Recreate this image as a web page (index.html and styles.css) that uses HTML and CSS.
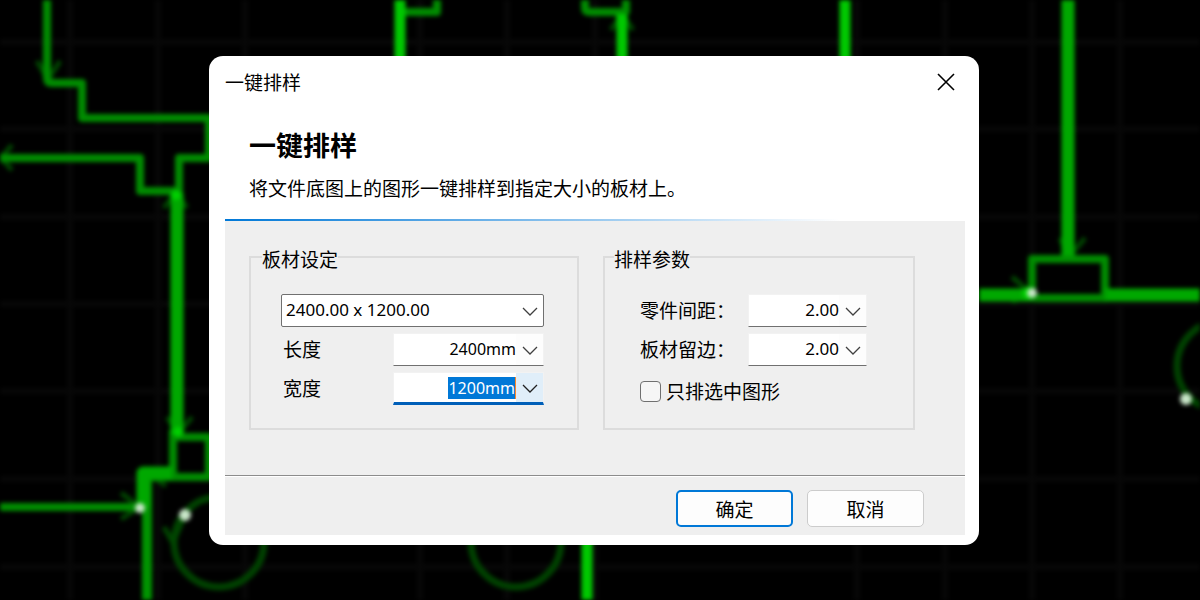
FILE: index.html
```html
<!DOCTYPE html>
<html lang="zh-CN">
<head>
  <meta charset="UTF-8">
  <meta name="viewport" content="width=device-width, initial-scale=1.0">
  <title>一键排样</title>
  <link rel="stylesheet" href="styles.css">
</head>
<body>
<svg class="drawing" viewBox="0 0 1200 600" preserveAspectRatio="xMidYMid slice" aria-hidden="true">
  <path class="grid" d="M70 0V600M158 0V600M245 0V600M420 0V600M507 0V600M595 0V600M857 0V600M945 0V600M1032 0V600M1120 0V600M0 42H1200M0 129H1200M0 217H1200M0 304H1200M0 391H1200M0 479H1200M0 567H1200"/>

  <!-- arrows -->
  <path class="arrow" d="M37 61L48 80L60 61M12 145L1 158L12 170M164 208L176 192L187 208M167 417L178 434L192 417M121 493L140 507L121 519M154 478L166 486M611 30L622 14L633 30M1060 238L1069 257L1085 238M1012 277L1030 292L1012 302"/>

  <!-- circles -->
  <circle class="arc" cx="219" cy="542" r="45"/>
  <circle class="arc" cx="516" cy="542" r="45"/>
  <circle class="arc" cx="1222" cy="366" r="45"/>
  <path class="arrow" d="M164 527L173 543L185 515M1186 399L1200 405"/>

  <!-- part outlines -->
  <path class="line" d="M47 0V78Q47 83 52 83H82V118H209V158H179V195"/>
  <path class="line" d="M0 158H140V191H176M0 507H142"/>
  <path class="line" d="M173 430V475M176 437H209V477H148"/>
  <path class="line" d="M400 12H437V0M585 0V8Q585 12 590 12H622M626 0V14"/>
  <path class="line" d="M1032 295V259H1105V298H1032"/>
  <path class="line bold" d="M147 600V475"/>
  <path class="line heavy" d="M177 193V434M1068 0V256M979 295H1032M1105 295H1210"/>
  <path class="line heavy" d="M143 508V473H172"/>
  <path class="line bright" d="M400 -10V60M622 14V60M845 -10V60M587 540V610"/>
  <circle class="glow" cx="176" cy="195" r="5"/>
  <circle class="glow" cx="178" cy="432" r="5"/>
  <circle class="glow" cx="1028" cy="293" r="6"/>

  <circle class="node" cx="140" cy="508" r="5"/>
  <circle class="node" cx="185" cy="515" r="6"/>
  <circle class="node" cx="1032" cy="293" r="5"/>
  <circle class="node" cx="1186" cy="399" r="6"/>
</svg>

<main class="stage">
  <form class="dialog" id="nestForm">
    <div class="titlebar">
      <span>一键排样</span>
      <button type="button" class="close" aria-label="关闭">
        <svg viewBox="0 0 18 18" width="18" height="18"><path d="M1 1L17 17M17 1L1 17"/></svg>
      </button>
    </div>

    <header class="header">
      <h1>一键排样</h1>
      <p>将文件底图上的图形一键排样到指定大小的板材上。</p>
    </header>

    <div class="content">
      <fieldset class="group sheet">
        <legend>板材设定</legend>
        <div class="select-box">
          <select aria-label="板材尺寸">
            <option>2400.00 x 1200.00</option>
          </select>
          <svg class="chevron" viewBox="0 0 16 9"><path d="M1 1L8 8L15 1"/></svg>
        </div>
        <div class="row">
          <label for="length">长度</label>
          <div class="combo">
            <input type="text" id="length" class="unit" value="2400mm">
            <button type="button" aria-label="选择长度"><svg class="chevron" viewBox="0 0 16 9"><path d="M1 1L8 8L15 1"/></svg></button>
          </div>
        </div>
        <div class="row">
          <label for="width">宽度</label>
          <div class="combo active">
            <input type="text" id="width" class="unit" value="1200mm">
            <button type="button" aria-label="选择宽度"><svg class="chevron" viewBox="0 0 16 9"><path d="M1 1L8 8L15 1"/></svg></button>
          </div>
        </div>
      </fieldset>

      <fieldset class="group params">
        <legend>排样参数</legend>
        <div class="row">
          <label for="gap">零件间距：</label>
          <div class="combo">
            <input type="text" id="gap" value="2.00">
            <button type="button" aria-label="选择零件间距"><svg class="chevron" viewBox="0 0 16 9"><path d="M1 1L8 8L15 1"/></svg></button>
          </div>
        </div>
        <div class="row">
          <label for="margin">板材留边：</label>
          <div class="combo">
            <input type="text" id="margin" value="2.00">
            <button type="button" aria-label="选择板材留边"><svg class="chevron" viewBox="0 0 16 9"><path d="M1 1L8 8L15 1"/></svg></button>
          </div>
        </div>
        <div class="check">
          <input type="checkbox" id="selectedOnly">
          <label for="selectedOnly">只排选中图形</label>
        </div>
      </fieldset>
    </div>

    <footer class="footer">
      <button type="submit" class="btn primary">确定</button>
      <button type="button" class="btn">取消</button>
    </footer>
  </form>
</main>

<script>
  const widthInput = document.getElementById('width');
  widthInput.focus();
  widthInput.select();

  document.getElementById('nestForm').addEventListener('submit', e => e.preventDefault());
</script>
</body>
</html>
```
FILE: styles.css
```css
:root {
  --panel: #efefef;
  --group-border: #dcdcdc;
  --accent: #0078d7;
  --accent-dark: #005fb8;
  --text: #000000;
}

* {
  box-sizing: border-box;
}

body {
  margin: 0;
  background-color: #000000;
  color: var(--text);
  font-family: "Noto Sans CJK SC", sans-serif;
  font-size: 19px;
}

/* CAD drawing behind the dialog */
.drawing {
  position: fixed;
  inset: 0;
  width: 100%;
  height: 100%;
  fill: none;
  filter: blur(2px);
}

.grid {
  stroke: #070707;
  stroke-width: 6px;
}

.line {
  stroke: #008c00;
  stroke-width: 8px;
  stroke-linejoin: round;
}

.line.bold {
  stroke: #009400;
  stroke-width: 10px;
}

.line.heavy {
  stroke: #00a800;
  stroke-width: 13px;
}

.line.bright {
  stroke: #00c800;
  stroke-width: 11px;
}

.arrow {
  stroke: #004600;
  stroke-width: 5px;
}

.arc {
  stroke: #004200;
  stroke-width: 7px;
}

.glow {
  fill: #00d000;
}

.node {
  fill: #c8e6c8;
}

.stage {
  position: relative;
  display: flex;
  align-items: center;
  justify-content: center;
  min-height: 100vh;
  padding: 1px 12px 0 0;
}

.dialog {
  width: 100%;
  max-width: 770px;
  padding: 0 14px 10px 16px;
  background-color: #ffffff;
  border-radius: 14px;
}

.titlebar {
  display: flex;
  align-items: center;
  justify-content: space-between;
  height: 52px;
}

.titlebar span {
  padding-bottom: 2px;
}

.close {
  display: flex;
  padding: 10px;
  border: none;
  background: none;
}

.close path {
  fill: none;
  stroke: #000000;
  stroke-width: 1.6;
}

.header {
  padding: 19px 24px 18px;
  border-bottom: 2px solid;
  border-image: linear-gradient(to right, var(--accent), #ffffff 83%) 1;
}

.header h1 {
  margin: 0 0 12px;
  font-size: 27px;
  line-height: 36px;
}

.header p {
  margin: 0;
  line-height: 26px;
}

.content {
  display: grid;
  grid-template-columns: 330fr 312fr;
  gap: 24px;
  padding: 24px 50px 45px 24px;
  background-color: var(--panel);
  border-bottom: 1px solid #8c8c8c;
}

.group {
  display: flex;
  flex-direction: column;
  gap: 6px;
  min-width: 0;
  margin: 0;
  border: 2px solid var(--group-border);
}

.sheet {
  padding: 25px 33px 17px 30px;
}

.params {
  padding: 25px 46px 17px 35px;
}

.group legend {
  margin-left: -19px;
  padding: 5px 0 1px;
  line-height: 18px;
}

.params legend {
  margin-left: -26px;
}

.row {
  display: flex;
  align-items: center;
  justify-content: space-between;
  height: 33px;
}

.row label,
.check label {
  padding-bottom: 2px;
}

.sheet .row label {
  padding-left: 2px;
}

.chevron {
  width: 16px;
  height: 9px;
  fill: none;
  stroke: #404040;
  stroke-width: 1.3;
}

.select-box {
  position: relative;
  height: 33px;
}

.select-box select {
  width: 100%;
  height: 100%;
  padding: 0 32px 2px 4px;
  appearance: none;
  border: 1px solid #707070;
  border-radius: 2px;
  background-color: #ffffff;
  color: var(--text);
  font-family: "Noto Sans", sans-serif;
  font-size: 17px;
}

.select-box .chevron {
  position: absolute;
  top: 13px;
  right: 6px;
}

.combo {
  display: flex;
  align-items: center;
  width: 151px;
  height: 33px;
  background-color: #ffffff;
  border: 1px solid #f2f2f2;
  border-bottom: 1px solid #707070;
}

.params .combo {
  width: 119px;
}

.combo input {
  flex: 1;
  min-width: 0;
  padding: 0 0 2px;
  border: none;
  outline: none;
  background: none;
  color: var(--text);
  font-family: "Noto Sans", sans-serif;
  font-size: 17px;
  text-align: right;
}

.combo .unit {
  font-size: 16px;
}

.combo input::selection {
  background-color: var(--accent);
  color: #ffffff;
}

.combo button {
  display: flex;
  align-items: center;
  align-self: stretch;
  padding: 2px 5px 0 6px;
  border: none;
  background-color: #fdfdfd;
}

.combo.active {
  border-bottom: 3px solid var(--accent-dark);
}

.combo.active button {
  background-color: #e0eef9;
}

/* text caret at the end of the selection */
.combo.active input {
  padding: 0;
  border-right: 1px solid #ff8728;
}

.combo.active .chevron {
  stroke: #202020;
}

.check {
  display: flex;
  align-items: center;
  gap: 5px;
  height: 39px;
}

.check input {
  width: 21px;
  height: 21px;
  margin: 0;
  appearance: none;
  border: 1px solid #707070;
  border-radius: 4px;
  background-color: #f6f6f6;
}

.footer {
  display: flex;
  justify-content: flex-end;
  gap: 14px;
  padding: 13px 41px 8px;
  border-top: 1px solid #ffffff;
  background-color: var(--panel);
}

.btn {
  width: 117px;
  height: 37px;
  padding: 0;
  border: 1px solid #cccccc;
  border-radius: 5px;
  background-color: #fdfdfd;
  color: var(--text);
  font-family: inherit;
  font-size: 19px;
}

.btn.primary {
  border: 2px solid var(--accent);
}
```
